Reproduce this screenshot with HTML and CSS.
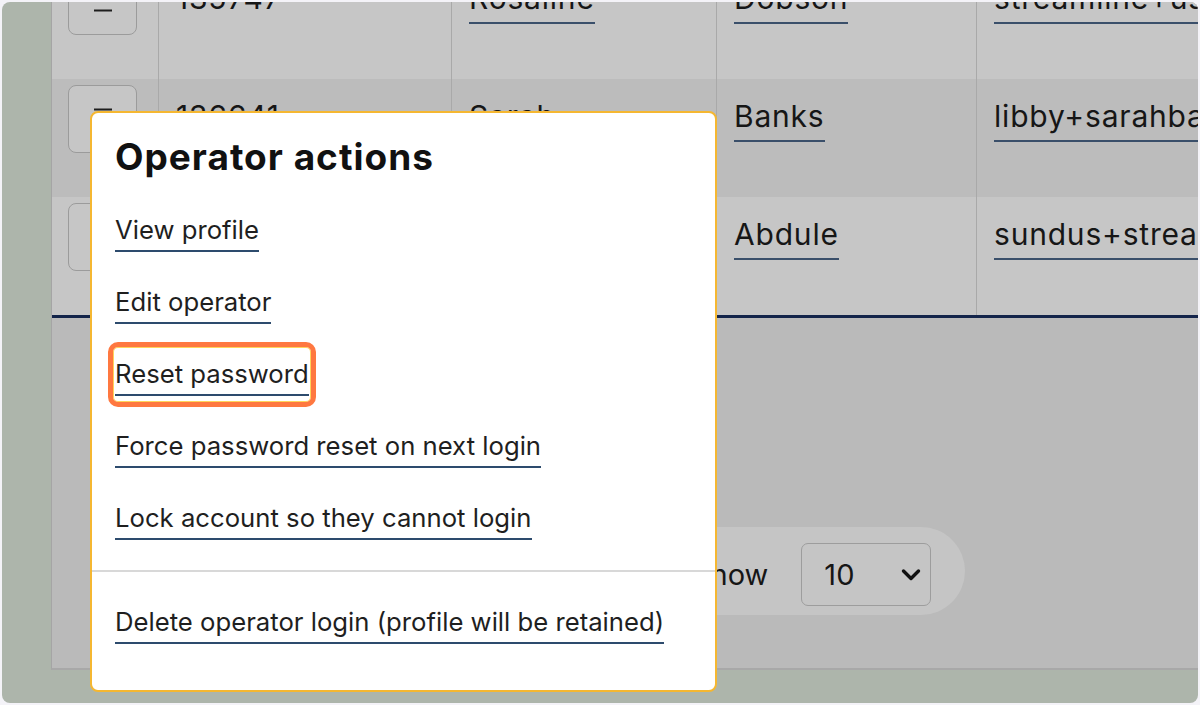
FILE: index.html
```html
<!DOCTYPE html>
<html lang="en">
<head>
<meta charset="utf-8">
<title>Operators</title>
<link rel="stylesheet" href="styles.css">
</head>
<body>
<div class="screen">
  <div class="panel">
    <div class="table">
      <div class="row light">
        <div class="cell c-btn"><button class="menu-btn" type="button"><span class="bars"></span></button></div>
        <div class="cell"><span class="plain">135747</span></div>
        <div class="cell"><a class="lnk">Rosaline</a></div>
        <div class="cell"><a class="lnk">Dobson</a></div>
        <div class="cell"><a class="lnk">streamline+usersupport@example.com</a></div>
      </div>
      <div class="row dark">
        <div class="cell c-btn"><button class="menu-btn" type="button"><span class="bars"></span></button></div>
        <div class="cell"><span class="plain">136641</span></div>
        <div class="cell"><a class="lnk">Sarah</a></div>
        <div class="cell"><a class="lnk">Banks</a></div>
        <div class="cell"><a class="lnk">libby+sarahbanks@example.com</a></div>
      </div>
      <div class="row light">
        <div class="cell c-btn"><button class="menu-btn" type="button"><span class="bars"></span></button></div>
        <div class="cell"><span class="plain">137012</span></div>
        <div class="cell"><a class="lnk">Sundus</a></div>
        <div class="cell"><a class="lnk">Abdule</a></div>
        <div class="cell"><a class="lnk">sundus+streamline@example.com</a></div>
      </div>
    </div>
    <div class="pager">
      <div class="pill">
        <span class="show-label">Show</span>
        <div class="select">
          <span class="sel-val">10</span>
          <svg class="chev" width="20" height="14" viewBox="0 0 20 14"><polyline points="2.5,3 10,10.5 17.5,3" fill="none" stroke="#111" stroke-width="3.4" stroke-linecap="round" stroke-linejoin="round"/></svg>
        </div>
      </div>
    </div>
  </div>

  <div class="modal">
    <h2 class="modal-title">Operator actions</h2>
    <ul class="actions">
      <li><a class="act">View profile</a></li>
      <li><a class="act">Edit operator</a></li>
      <li><a class="act highlighted">Reset password</a></li>
      <li><a class="act">Force password reset on next login</a></li>
      <li><a class="act">Lock account so they cannot login</a></li>
    </ul>
    <div class="divider"></div>
    <ul class="actions danger">
      <li><a class="act">Delete operator login (profile will be retained)</a></li>
    </ul>
  </div>
</div>
</body>
</html>
```

FILE: styles.css
```css
* { box-sizing: border-box; }

html, body {
  margin: 0;
  padding: 0;
  background: #f4f3f8;
}

body {
  font-family: Inter, "Noto Sans", "Liberation Sans", sans-serif;
  color: #1b1b1b;
}

.screen {
  position: relative;
  margin: 2px;
  height: 701px;
  border-radius: 8px;
  overflow: hidden;
  background: #adb5ab;
}

.panel {
  display: flex;
  flex-direction: column;
  margin-left: 49px;
  width: 1400px;
  height: 668px;
  background: #bababa;
  border-left: 1px solid #a5a5a5;
  border-bottom: 2px solid #a8a8a8;
}

.table {
  margin-top: -41px;
  border-bottom: 3px solid #13244a;
}

.row {
  display: grid;
  grid-template-columns: 107px 293px 265px 260px 1fr;
  height: 118px;
}

.row.light { background: #c6c6c6; }
.row.dark { background: #bcbcbc; }

.cell {
  border-right: 1px solid #a9a9a9;
  padding: 20px 17px 0;
  white-space: nowrap;
  overflow: hidden;
}

.cell:last-child { border-right: none; }

.cell.c-btn {
  padding: 6px 0 0 16px;
}

.menu-btn {
  display: flex;
  align-items: center;
  justify-content: center;
  width: 69px;
  height: 68px;
  padding: 0;
  border: 1.5px solid #9b9b9b;
  border-radius: 8px;
  background: #c6c6c6;
}

.bars {
  display: block;
  width: 18px;
  height: 2px;
  background: #1e1e1e;
  box-shadow: 0 -9.5px 0 #1e1e1e, 0 9.5px 0 #1e1e1e;
}

.plain,
.lnk {
  display: inline-block;
  font-size: 30px;
  line-height: 35px;
  letter-spacing: 0.8px;
  color: #161616;
}

.lnk {
  padding-bottom: 6px;
  border-bottom: 2px solid #3a4f6a;
}

.pager {
  margin-top: 209px;
}

.pill {
  display: inline-flex;
  align-items: center;
  margin-left: 555px;
  height: 88px;
  padding: 7px 34px 0 85px;
  border-radius: 44px;
  background: #c5c5c5;
}

.show-label {
  font-size: 29px;
  line-height: 35px;
  color: #161616;
  margin-right: 33px;
}

.select {
  display: flex;
  align-items: center;
  justify-content: space-between;
  width: 130px;
  height: 63px;
  padding: 0 9px 0 22px;
  border: 1px solid #9d9d9d;
  border-radius: 7px;
  background: #c5c5c5;
}

.sel-val {
  font-size: 29px;
  line-height: 35px;
  color: #161616;
}

.chev { display: block; }

.modal {
  position: absolute;
  left: 88px;
  top: 109px;
  width: 627px;
  height: 581px;
  padding-top: 22px;
  background: #ffffff;
  border: 2px solid #f5b731;
  border-radius: 8px;
}

.modal-title {
  margin: 0 0 36px;
  padding-left: 23px;
  font-size: 37px;
  line-height: 43px;
  font-weight: 700;
  letter-spacing: 1px;
  color: #111;
}

.actions {
  list-style: none;
  margin: 0;
  padding: 0 0 0 23px;
  display: flex;
  flex-direction: column;
  gap: 34px;
}

.act {
  position: relative;
  display: inline-block;
  font-size: 25.7px;
  line-height: 31px;
  padding-bottom: 5px;
  border-bottom: 2px solid #2d4b6d;
  color: #1f1f1f;
  white-space: nowrap;
}

.act.highlighted::after {
  content: "";
  position: absolute;
  top: -16px;
  left: -7px;
  right: -7px;
  bottom: -13px;
  border: 5px solid #ff7840;
  border-radius: 10px;
  box-shadow: inset 0 0 0 1px #ffd45a;
}

.divider {
  height: 2px;
  margin: 30px 0 34px;
  background: #d8d8d8;
}
```
